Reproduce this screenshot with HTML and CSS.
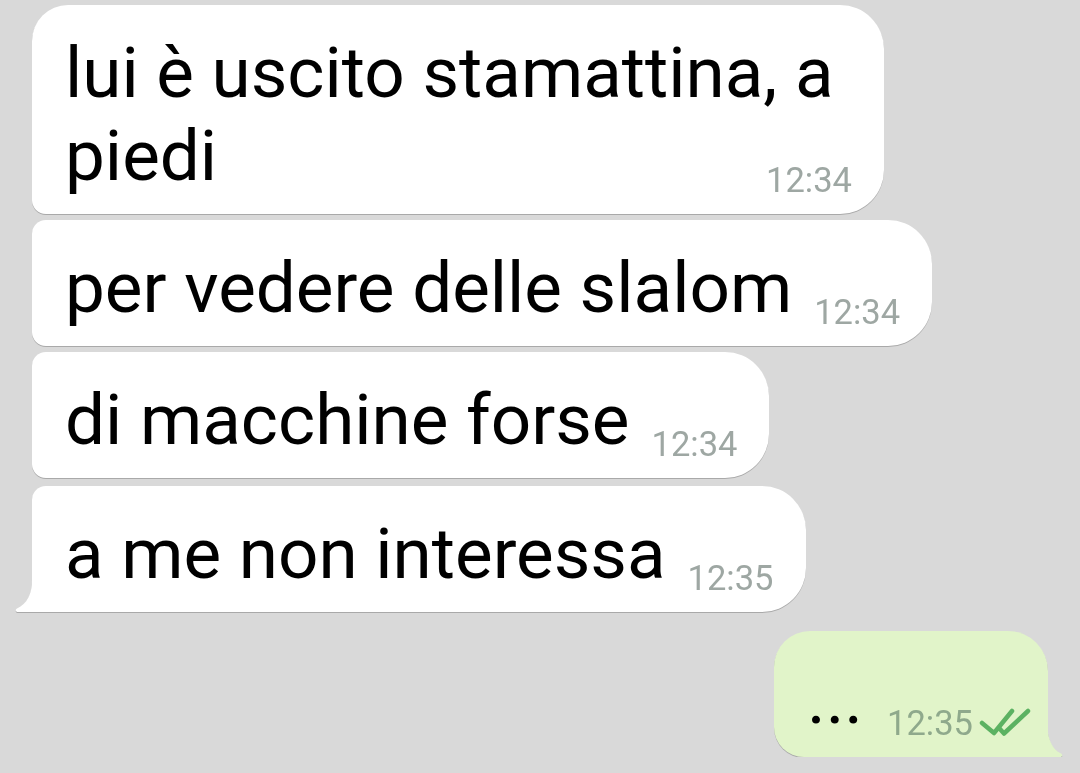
FILE: index.html
```html
<!DOCTYPE html>
<html lang="it">
<head>
    <meta charset="UTF-8">
    <meta name="viewport" content="width=device-width, initial-scale=1.0">
    <title>Chat</title>
    <link rel="stylesheet" href="styles.css">
</head>
<body>

<div class="chat">
    <div class="msg in first long">
        <span class="text">lui è uscito stamattina, a<br>piedi</span><span class="meta">12:34</span>
    </div>
    <div class="msg in">
        <span class="text">per vedere delle slalom</span><span class="meta">12:34</span>
    </div>
    <div class="msg in">
        <span class="text">di macchine forse</span><span class="meta">12:34</span>
    </div>
    <div class="msg in last">
        <span class="text">a me non interessa</span><span class="meta">12:35</span>
        <svg class="tail tail-in" width="18" height="32" viewBox="0 0 18 32">
            <path d="M18 0 L17 0 C17 14 12 24 2 28.5 C0 29.5 0.5 32 3 32 L18 32 Z" fill="#ffffff"/>
        </svg>
    </div>

    <div class="msg out">
        <span class="text">...</span><span class="meta">12:35<svg class="ticks" width="52" height="30" viewBox="0 0 52 30">
                <path d="M3 15 L15 25 L33 3" fill="none" stroke="#5cb262" stroke-width="4.5" stroke-linecap="round" stroke-linejoin="round"/>
                <path d="M20.5 20.5 L25 25.5 L49 3" fill="none" stroke="#5cb262" stroke-width="4.5" stroke-linecap="round" stroke-linejoin="round"/>
            </svg></span>
        <svg class="tail tail-out" width="18" height="38" viewBox="0 0 18 38">
            <path d="M0 0 L1 0 C1 18 5 30 15 34.5 C17 35.5 16.5 38 14 38 L0 38 Z" fill="#e1f4c9"/>
        </svg>
    </div>
</div>

</body>
</html>
```

FILE: styles.css
```css
body {
    margin: 0;
    background-color: #d9d9d9;
    font-family: Roboto, "Noto Sans", sans-serif;
    overflow: hidden;
}
.chat {
    display: flex;
    flex-direction: column;
    align-items: flex-start;
    gap: 6px;
    padding: 5px 32px 0 32px;
}
.msg {
    position: relative;
    box-sizing: border-box;
    padding: 26px 32px 17px 33px;
    font-size: 71px;
    color: #000;
    background-color: #ffffff;
    border-radius: 14px 44px 44px 14px;
    filter: drop-shadow(0 1.5px 0.6px rgba(0, 0, 0, 0.22));
}
.msg.first {
    border-top-left-radius: 36px;
}
.msg.long {
    width: 852px;
}
.msg.last {
    margin-top: 2px;
    border-bottom-left-radius: 0;
}
.meta {
    float: right;
    margin: 47px 0 -5px 22px;
    font-size: 34.5px;
    line-height: 38px;
    color: #9ea7a3;
}
.tail {
    position: absolute;
    bottom: 0;
}
.tail-in {
    left: -17px;
}
.msg.out {
    align-self: flex-end;
    margin-top: 13px;
    padding-right: 17px;
    background-color: #e1f4c9;
    border-radius: 36px 40px 0 30px;
}
.msg.out .meta {
    margin-left: 24px;
    color: #8fa98c;
}
.ticks {
    margin-left: 6px;
    vertical-align: -3px;
}
.tail-out {
    right: -16px;
}
```
